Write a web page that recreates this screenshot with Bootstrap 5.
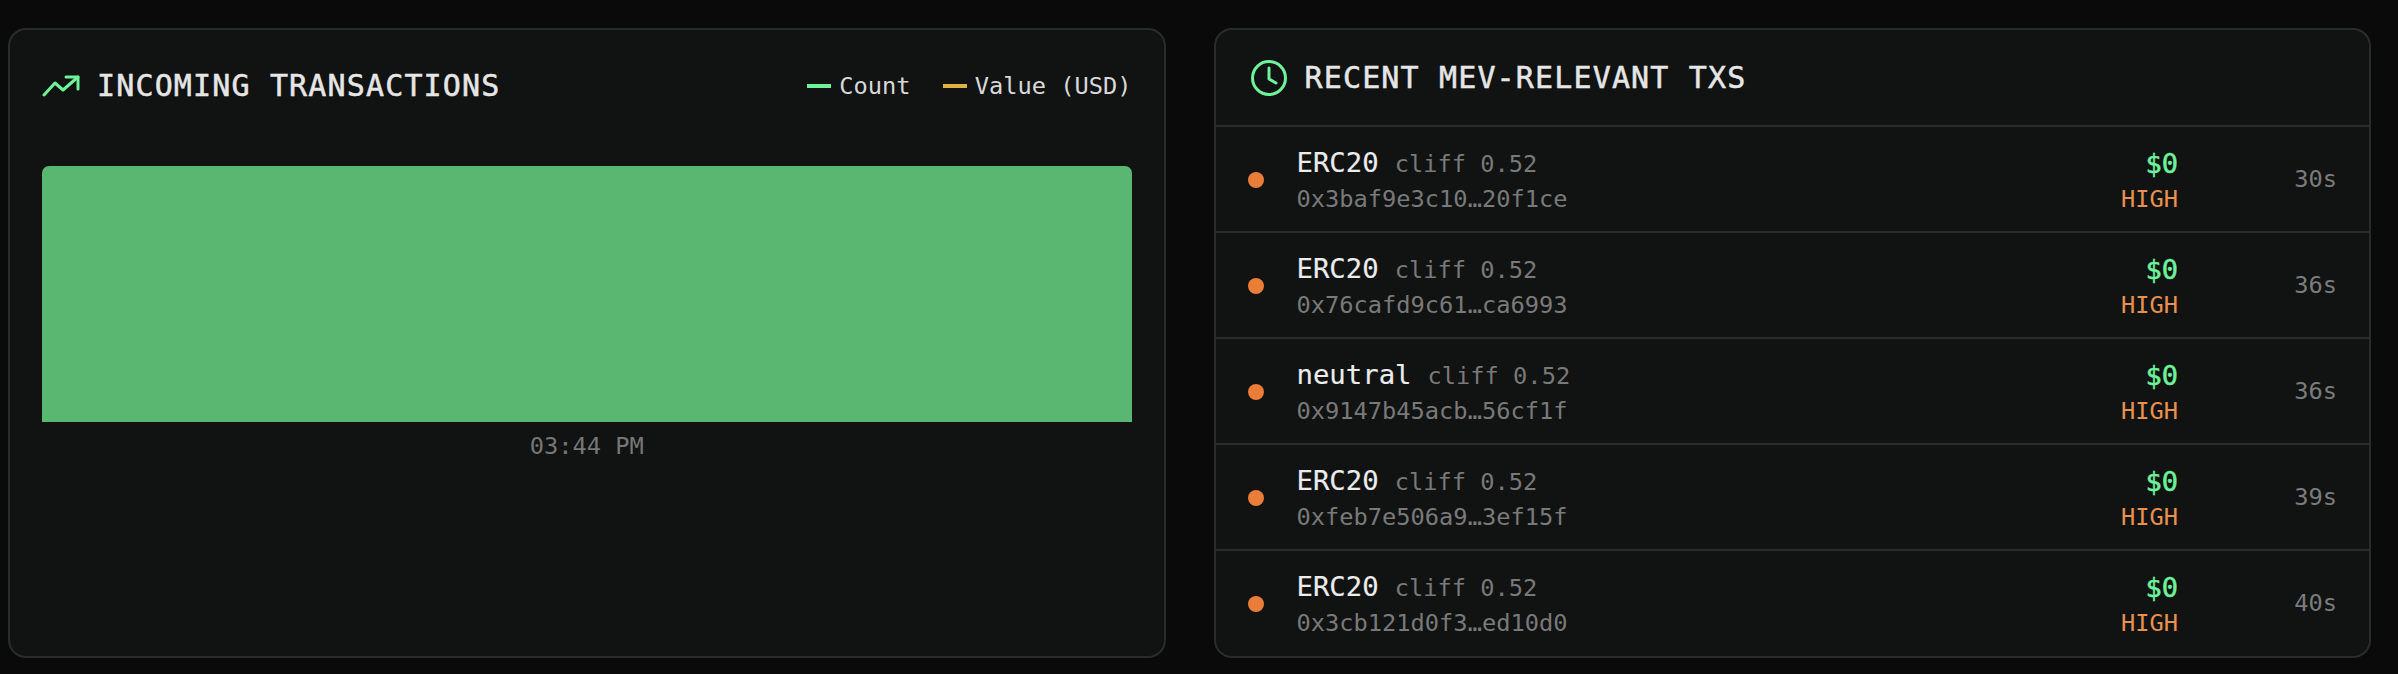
<!DOCTYPE html>
<html lang="en">
  <head>
    <meta charset="UTF-8" />
    <meta name="viewport" content="width=device-width, initial-scale=1.0" />
    <title>MEV dashboard</title>

    <link
      href="https://cdn.jsdelivr.net/npm/bootstrap@5.3.0/dist/css/bootstrap.min.css"
      rel="stylesheet"
    />

    <style>
      body {
        background-color: #0a0a0a;
        font-family: "DejaVu Sans Mono", "Liberation Mono", monospace;
        color: #e6e6e6;
        overflow: hidden;
      }

      .dash-wrap {
        padding: 28px 27px 0 8px;
        gap: 48px;
      }

      .panel {
        flex: 1 1 0;
        height: 630px;
        background-color: #111212;
        border: 2px solid #2a2b2b;
        border-radius: 18px;
        color: #e6e6e6;
      }

      .panel-title {
        font-size: 30px;
        line-height: 36px;
        letter-spacing: 1.15px;
        font-weight: 400;
        color: #e6e6e6;
        -webkit-text-stroke: 0.5px #e6e6e6;
        margin: 0;
      }

      .chart-head {
        padding: 38px 32px 0 32px;
        height: 136px;
      }

      .trend-icon {
        width: 38px;
        height: 22px;
        margin-right: 17px;
      }

      .legend-item {
        font-size: 23.7px;
        line-height: 36px;
        margin-left: 32px;
        color: #d8d8d8;
      }

      .legend-line {
        width: 24px;
        height: 4px;
        margin-right: 8px;
      }

      .chart-wrap {
        padding: 0 32px;
      }

      .chart-bar {
        height: 256px;
        background-color: #5ab771;
        border-radius: 7px 7px 0 0;
      }

      .chart-tick {
        font-size: 23.7px;
        line-height: 28px;
        margin-top: 10px;
        color: #767676;
      }

      .tx-head {
        height: 97px;
        padding-left: 34px;
        border-bottom: 2px solid #2a2b2b;
      }

      .clock-icon {
        width: 38px;
        height: 38px;
        margin-right: 17px;
      }

      .panel > .list-group {
        border-top: 0;
        border-bottom: 0;
      }

      .list-group-flush > .tx-row {
        height: 106px;
        padding: 2px 32px 0 32px;
        background: transparent;
        border-color: #2a2b2b;
        border-width: 0 0 2px 0;
        color: #e6e6e6;
      }

      .list-group-flush > .tx-row:last-child {
        border-bottom-width: 0;
        padding-top: 0;
      }

      .tx-dot {
        width: 16px;
        height: 16px;
        background-color: #ea7d38;
        margin-right: 33px;
      }

      .tx-name {
        font-size: 27.3px;
        line-height: 34px;
        margin-right: 16px;
        color: #ececec;
        -webkit-text-stroke: 0.15px #ececec;
      }

      .tx-meta {
        font-size: 23.7px;
        line-height: 34px;
        color: #797979;
      }

      .tx-hash {
        font-size: 23.7px;
        line-height: 30px;
        margin-top: 3px;
        color: #797979;
      }

      .tx-value {
        font-size: 27px;
        line-height: 34px;
        color: #6ef29a;
        -webkit-text-stroke: 0.5px #6ef29a;
      }

      .tx-risk {
        font-size: 23.7px;
        line-height: 30px;
        margin-top: 3px;
        color: #e8914f;
      }

      .tx-age {
        width: 159px;
        font-size: 23.7px;
        color: #7b7b7b;
      }
    </style>
  </head>
  <body>
    <div class="d-flex dash-wrap">
      <!-- Chart panel -->
      <div class="card panel">
        <div class="d-flex justify-content-between align-items-start flex-shrink-0 chart-head">
          <div class="d-flex align-items-center">
            <svg class="trend-icon" viewBox="0 0 38 22" fill="none" stroke="#6ef29a" stroke-width="3" stroke-linecap="round" stroke-linejoin="round">
              <path d="M2 20 L13 8 L21 15 L36 2" />
              <path d="M24 2 H36 V14" />
            </svg>
            <h2 class="panel-title">INCOMING TRANSACTIONS</h2>
          </div>
          <div class="d-flex align-items-center">
            <div class="d-flex align-items-center legend-item">
              <span class="legend-line" style="background-color: #6ef29a"></span>Count
            </div>
            <div class="d-flex align-items-center legend-item">
              <span class="legend-line" style="background-color: #e3b23c"></span>Value (USD)
            </div>
          </div>
        </div>
        <div class="chart-wrap">
          <div class="chart-bar"></div>
          <div class="chart-tick text-center">03:44 PM</div>
        </div>
      </div>

      <!-- Recent transactions panel -->
      <div class="card panel">
        <div class="d-flex align-items-center flex-shrink-0 tx-head">
          <svg class="clock-icon" viewBox="0 0 38 38" fill="none" stroke="#6ef29a" stroke-width="3" stroke-linecap="round" stroke-linejoin="round">
            <circle cx="19" cy="19" r="16.5" />
            <path d="M19 9 V20 L26 24" />
          </svg>
          <h2 class="panel-title">RECENT MEV-RELEVANT TXS</h2>
        </div>
        <ul class="list-group list-group-flush" id="txList"></ul>
      </div>
    </div>

    <script src="https://cdn.jsdelivr.net/npm/bootstrap@5.3.0/dist/js/bootstrap.bundle.min.js"></script>

    <script>
      const txs = [
        { name: "ERC20", hash: "0x3baf9e3c10…20f1ce", age: "30s" },
        { name: "ERC20", hash: "0x76cafd9c61…ca6993", age: "36s" },
        { name: "neutral", hash: "0x9147b45acb…56cf1f", age: "36s" },
        { name: "ERC20", hash: "0xfeb7e506a9…3ef15f", age: "39s" },
        { name: "ERC20", hash: "0x3cb121d0f3…ed10d0", age: "40s" },
      ];

      const list = document.getElementById("txList");
      txs.forEach((tx) => {
        const li = document.createElement("li");
        li.className = "list-group-item d-flex align-items-center tx-row";
        li.innerHTML = `
          <span class="rounded-circle flex-shrink-0 tx-dot"></span>
          <div class="flex-grow-1">
            <div class="d-flex align-items-baseline">
              <span class="tx-name">${tx.name}</span>
              <span class="tx-meta">cliff 0.52</span>
            </div>
            <div class="tx-hash">${tx.hash}</div>
          </div>
          <div class="text-end">
            <div class="tx-value">$0</div>
            <div class="tx-risk">HIGH</div>
          </div>
          <div class="text-end tx-age">${tx.age}</div>
        `;
        list.appendChild(li);
      });
    </script>
  </body>
</html>
